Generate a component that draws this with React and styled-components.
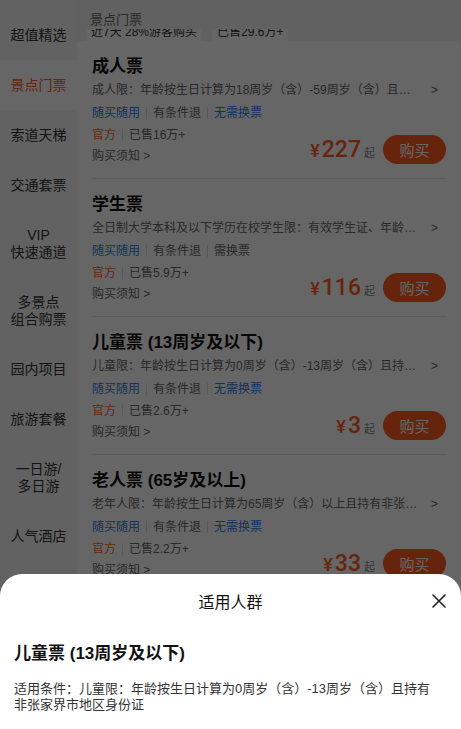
import React from 'react';
import styled, { createGlobalStyle } from 'styled-components';

const GlobalStyle = createGlobalStyle`
  html, body {
    margin: 0;
    padding: 0;
  }
  body {
    font-family: "Liberation Sans", "Noto Sans CJK SC", sans-serif;
    background: #fff;
    color: #111;
  }
  * {
    box-sizing: border-box;
  }
`;

const Page = styled.div`
  position: relative;
  display: flex;
  width: 100%;
  height: 100vh;
  overflow: hidden;
`;

const Sidebar = styled.nav`
  width: 77px;
  flex-shrink: 0;
  background: #f5f5f5;
  padding-top: 10px;
`;

const NavItem = styled.div`
  height: ${p => (p.$tall ? 67 : 50)}px;
  display: flex;
  align-items: center;
  justify-content: center;
  text-align: center;
  font-size: 14px;
  line-height: 17px;
  color: ${p => (p.$active ? '#ff5a1f' : '#333')};
  background: ${p => (p.$active ? '#fff' : 'transparent')};
`;

const Main = styled.main`
  flex: 1;
  min-width: 0;
  display: flex;
  flex-direction: column;
`;

const SectionTop = styled.div`
  height: 41px;
  padding: 10px 0 0 9px;
  background: #f3f3f3;
  display: flex;
  flex-direction: column;
`;

const SectionTitle = styled.div`
  padding-left: 4px;
  font-size: 13px;
  line-height: 19px;
  color: #666;
`;

const Peek = styled.div`
  height: 12px;
  overflow: hidden;
  display: flex;
  align-items: flex-end;
  gap: 10px;
`;

const Chip = styled.span`
  background: #fff;
  font-size: 12px;
  line-height: 16px;
  padding: 0 5px 1px;
  color: #333;
`;

const Card = styled.section`
  margin: 0 15px;
  padding: 14px 0 13px;
  border-top: ${p => (p.$first ? 'none' : '1px solid #e6e6e6')};
`;

const Title = styled.h3`
  margin: 0;
  font-size: 17px;
  line-height: 24px;
  font-weight: 700;
  color: #111;
`;

const Desc = styled.div`
  margin-top: 3px;
  display: flex;
  align-items: center;
  font-size: 12px;
  line-height: 17px;
  color: #666;
`;

const DescText = styled.span`
  flex: 1;
  min-width: 0;
  white-space: nowrap;
  overflow: hidden;
  text-overflow: ellipsis;
`;

const Chevron = styled.span`
  flex-shrink: 0;
  margin: 0 8px 0 10px;
  color: #666;
`;

const Row = styled.div`
  margin-top: ${p => p.$top || 0}px;
  display: flex;
  align-items: center;
  gap: 6px;
  font-size: 12px;
  line-height: 18px;
`;

const Tag = styled.span`
  color: ${p => (p.$tone === 'blue' ? '#2f7ef0' : p.$tone === 'orange' ? '#f26b21' : '#666')};
`;

const Sep = styled.span`
  width: 1px;
  height: 12px;
  background: #ddd;
`;

const Footer = styled.div`
  display: flex;
  justify-content: space-between;
  align-items: flex-end;
`;

const Notice = styled.div`
  margin-top: 3px;
  font-size: 12px;
  line-height: 18px;
  color: #666;
`;

const Buy = styled.div`
  display: flex;
  align-items: center;
  gap: 8px;
  margin-bottom: 1px;
`;

const Price = styled.div`
  display: flex;
  align-items: baseline;
  color: #ff5a1f;
`;

const Yen = styled.span`
  font-family: Roboto, "Liberation Sans", sans-serif;
  font-size: 18px;
  font-weight: 500;
  margin-right: 2px;
`;

const Amount = styled.span`
  font-family: Roboto, "Liberation Sans", sans-serif;
  font-size: 23px;
  font-weight: 500;
`;

const From = styled.span`
  font-size: 11px;
  color: #888;
  margin-left: 3px;
`;

const BuyButton = styled.button`
  width: 63px;
  height: 29px;
  border: none;
  border-radius: 15px;
  background: #ff5a1f;
  color: #fff;
  font-family: inherit;
  font-size: 15px;
  padding: 0;
`;

const Overlay = styled.div`
  position: absolute;
  inset: 0;
  background: rgba(0, 0, 0, 0.6);
`;

const Sheet = styled.div`
  position: absolute;
  left: 0;
  right: 0;
  bottom: 0;
  height: 155px;
  background: #fff;
  border-radius: 22px 22px 0 0;
`;

const SheetHeader = styled.div`
  height: 54px;
  display: grid;
  grid-template-columns: 40px 1fr 40px;
  align-items: center;
`;

const SheetTitle = styled.div`
  grid-column: 2;
  text-align: center;
  font-size: 16px;
  color: #111;
`;

const Close = styled.button`
  justify-self: end;
  margin-right: 15px;
  width: 14px;
  height: 14px;
  padding: 0;
  border: none;
  background: none;
  display: flex;
`;

const SheetBody = styled.div`
  padding: 14px 14px 0;
`;

const SheetText = styled.p`
  margin: 15px 0 0;
  padding-right: 8px;
  font-size: 13px;
  line-height: 16px;
  color: #333;
`;

const navItems = [
  { label: '超值精选' },
  { label: '景点门票', active: true },
  { label: '索道天梯' },
  { label: '交通套票' },
  { label: ['VIP', '快速通道'] },
  { label: ['多景点', '组合购票'] },
  { label: '园内项目' },
  { label: '旅游套餐' },
  { label: ['一日游/', '多日游'] },
  { label: '人气酒店' },
];

const tickets = [
  {
    name: '成人票',
    desc: '成人限：年龄按生日计算为18周岁（含）-59周岁（含）且持有非张家界市地区身份证',
    tags: [['随买随用', 'blue'], ['有条件退'], ['无需换票', 'blue']],
    sold: '已售16万+',
    price: '227',
  },
  {
    name: '学生票',
    desc: '全日制大学本科及以下学历在校学生限：有效学生证、年龄按生日计算',
    tags: [['随买随用', 'blue'], ['有条件退'], ['需换票']],
    sold: '已售5.9万+',
    price: '116',
  },
  {
    name: '儿童票 (13周岁及以下)',
    desc: '儿童限：年龄按生日计算为0周岁（含）-13周岁（含）且持有非张家界市地区身份证',
    tags: [['随买随用', 'blue'], ['有条件退'], ['无需换票', 'blue']],
    sold: '已售2.6万+',
    price: '3',
  },
  {
    name: '老人票 (65岁及以上)',
    desc: '老年人限：年龄按生日计算为65周岁（含）以上且持有非张家界市地区身份证',
    tags: [['随买随用', 'blue'], ['有条件退'], ['无需换票', 'blue']],
    sold: '已售2.2万+',
    price: '33',
  },
];

const CloseIcon = () => (
  <svg width="14" height="14" viewBox="0 0 14 14">
    <path d="M1 1L13 13M13 1L1 13" stroke="#222" strokeWidth="1.6" strokeLinecap="round" />
  </svg>
);

const TagList = ({ items }) =>
  items.map(([text, tone], i) => (
    <React.Fragment key={text}>
      {i > 0 && <Sep />}
      <Tag $tone={tone}>{text}</Tag>
    </React.Fragment>
  ));

const TicketCard = ({ t, first }) => (
  <Card $first={first}>
    <Title>{t.name}</Title>
    <Desc>
      <DescText>{t.desc}</DescText>
      <Chevron>&gt;</Chevron>
    </Desc>
    <Row $top={5}>
      <TagList items={t.tags} />
    </Row>
    <Footer>
      <div>
        <Row $top={4}>
          <TagList items={[['官方', 'orange'], [t.sold]]} />
        </Row>
        <Notice>购买须知 &gt;</Notice>
      </div>
      <Buy>
        <Price>
          <Yen>¥</Yen>
          <Amount>{t.price}</Amount>
          <From>起</From>
        </Price>
        <BuyButton>购买</BuyButton>
      </Buy>
    </Footer>
  </Card>
);

export default function App() {
  return (
    <Page>
      <GlobalStyle />
      <Sidebar>
        {navItems.map((item, i) => {
          const tall = Array.isArray(item.label);
          return (
            <NavItem key={i} $tall={tall} $active={item.active}>
              {tall ? (
                <span>
                  {item.label[0]}
                  <br />
                  {item.label[1]}
                </span>
              ) : (
                item.label
              )}
            </NavItem>
          );
        })}
      </Sidebar>
      <Main>
        <SectionTop>
          <SectionTitle>景点门票</SectionTitle>
          <Peek>
            <Chip>近7天 28%游客购买</Chip>
            <Chip>已售29.6万+</Chip>
          </Peek>
        </SectionTop>
        {tickets.map((t, i) => (
          <TicketCard key={t.name} t={t} first={i === 0} />
        ))}
      </Main>
      <Overlay />
      <Sheet>
        <SheetHeader>
          <SheetTitle>适用人群</SheetTitle>
          <Close aria-label="关闭">
            <CloseIcon />
          </Close>
        </SheetHeader>
        <SheetBody>
          <Title>儿童票 (13周岁及以下)</Title>
          <SheetText>
            适用条件：儿童限：年龄按生日计算为0周岁（含）-13周岁（含）且持有非张家界市地区身份证
          </SheetText>
        </SheetBody>
      </Sheet>
    </Page>
  );
}
